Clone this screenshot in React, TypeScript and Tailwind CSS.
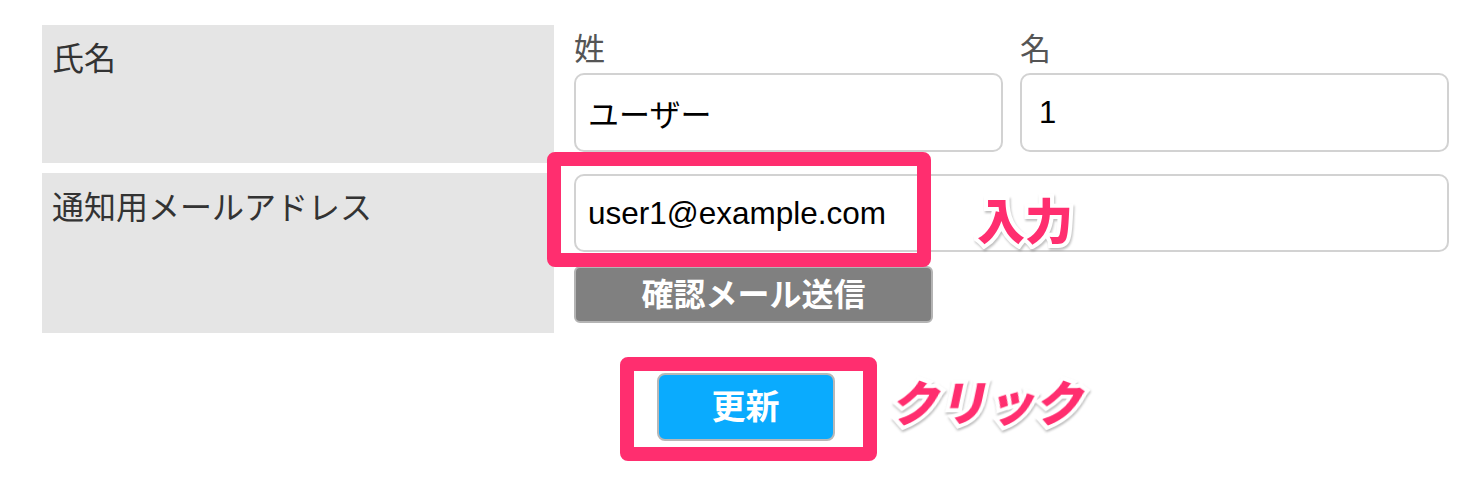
import React from 'react';

const font = "font-['Liberation_Sans','Noto_Sans_CJK_JP',sans-serif]";

const Field: React.FC<{ value: string; indent?: string }> = ({ value, indent = 'px-[12px]' }) => (
  <input
    readOnly
    value={value}
    className={`${font} block w-full h-[79px] ${indent} text-[31px] text-black bg-white border-2 border-[#d2d2d2] rounded-[10px] outline-none`}
  />
);

const App: React.FC = () => {
  return (
    <div className={`${font} relative w-[1475px] h-[489px] bg-white overflow-hidden`}>
      <div className="ml-[42px] pt-[25px] w-[1407px] flex flex-col gap-[10px]">
        {/* 氏名 */}
        <div className="flex gap-[20px]">
          <div className="w-[512px] h-[138px] bg-[#e5e5e5] pl-[10px] pt-[16px] text-[32px] leading-[36px] text-[#333]">
            氏名
          </div>
          <div className="w-[875px] grid grid-cols-2 gap-[17px] pt-[7px]">
            <div>
              <div className="text-[31px] leading-[36px] text-[#555] mb-[5px]">姓</div>
              <Field value="ユーザー" />
            </div>
            <div>
              <div className="text-[31px] leading-[36px] text-[#555] mb-[5px]">名</div>
              <Field value="1" indent="pl-[17px] pr-[12px]" />
            </div>
          </div>
        </div>

        {/* メールアドレス */}
        <div className="flex gap-[20px]">
          <div className="w-[512px] h-[160px] bg-[#e5e5e5] pl-[10px] pt-[17px] text-[32px] leading-[36px] text-[#333]">
            通知用メールアドレス
          </div>
          <div className="w-[875px] pt-[1px]">
            <input
              readOnly
              value="user1@example.com"
              className={`${font} block w-full h-[78px] px-[12px] text-[31.5px] text-black bg-white border-2 border-[#d2d2d2] rounded-[10px] outline-none`}
            />
            <button className="mt-[14px] w-[359px] h-[57px] bg-[#808080] border-2 border-[#b4b4b4] rounded-[6px] text-white font-bold text-[32px] leading-none">
              確認メール送信
            </button>
          </div>
        </div>

        <div className="flex justify-center mt-[30px]">
          <button className="w-[178px] h-[68px] bg-[#0aabfe] border-2 border-[#b8b8b8] rounded-[8px] text-white font-bold text-[34px] leading-none">
            更新
          </button>
        </div>
      </div>

      {/* annotations */}
      <div className="absolute left-[547px] top-[152px] w-[384px] h-[115px] border-[14px] border-[#ff2e6f] rounded-[8px]" />
      <div className="absolute left-[620px] top-[357px] w-[257px] h-[104px] border-[14px] border-[#ff2e6f] rounded-[8px]" />
      <div className="absolute left-[977px] top-[199px] text-[48px] leading-none font-black text-[#ff2e6f] [-webkit-text-stroke:8px_white] [paint-order:stroke_fill] [filter:drop-shadow(1px_2px_1px_rgba(0,0,0,0.25))]">
        入力
      </div>
      <div className="absolute left-[894px] top-[381px] text-[48px] leading-none font-black text-[#ff2e6f] -skew-x-12 [-webkit-text-stroke:8px_white] [paint-order:stroke_fill] [filter:drop-shadow(1px_2px_1px_rgba(0,0,0,0.25))]">
        クリック
      </div>
    </div>
  );
};

export default App;
